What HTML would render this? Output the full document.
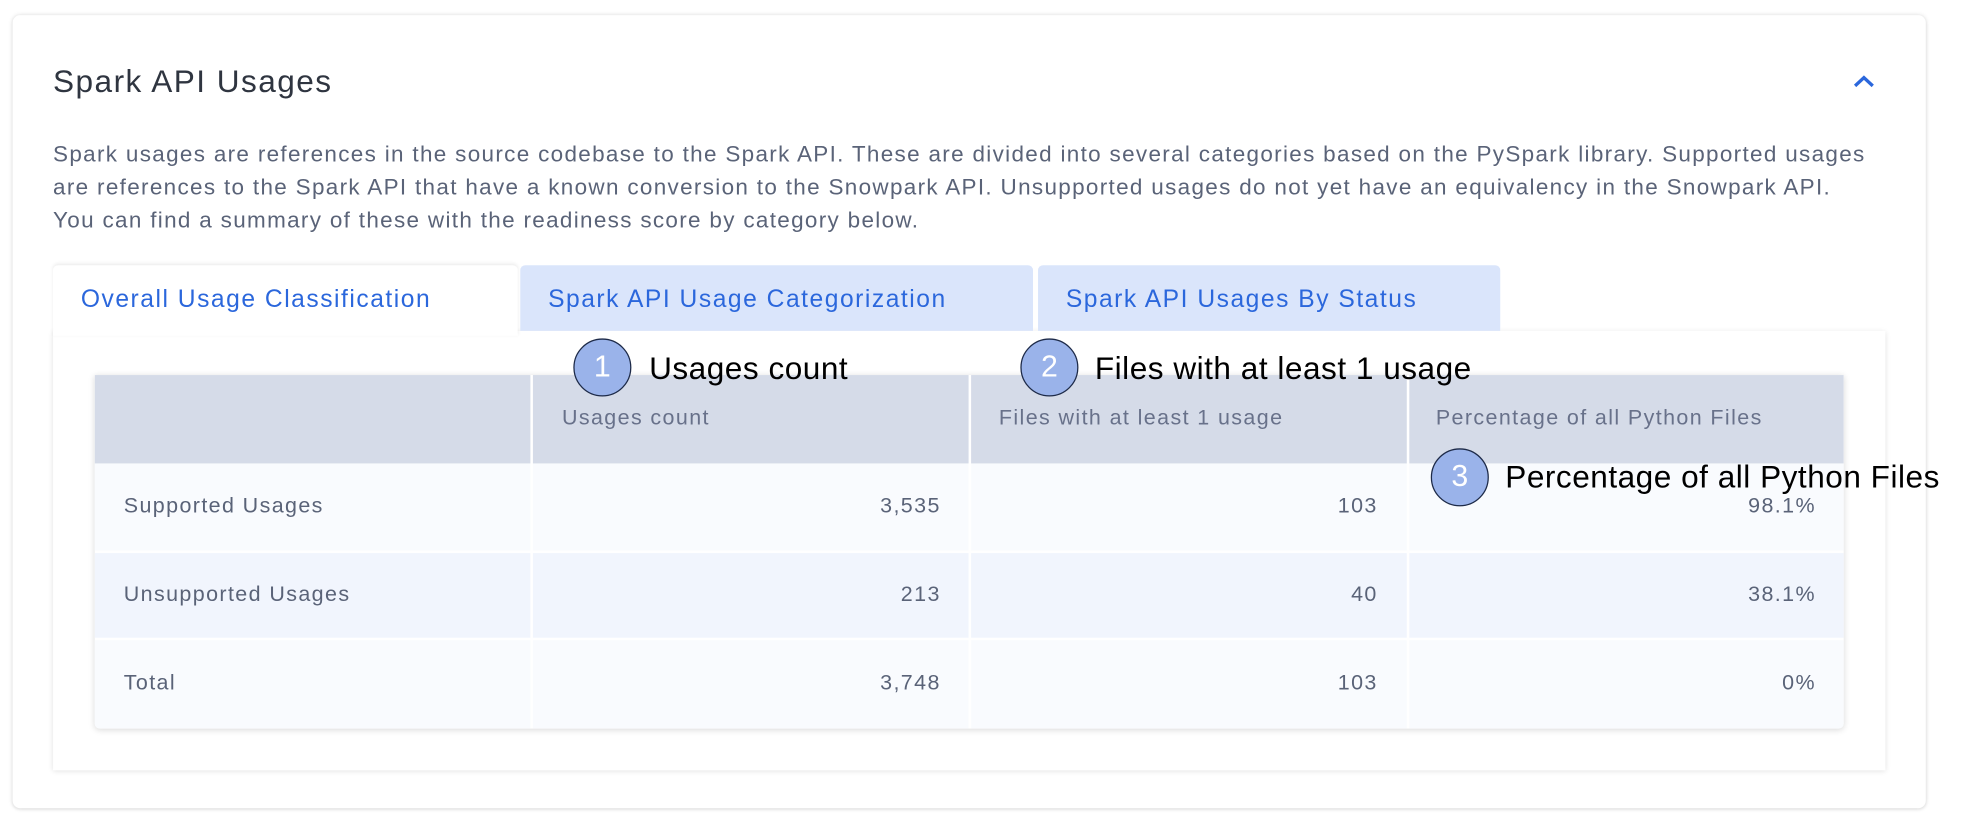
<!DOCTYPE html>
<html><head><meta charset="utf-8"><style>
html,body{margin:0;padding:0;background:#fff;width:1970px;height:822px;overflow:hidden}
#s{position:absolute;left:0;top:0;width:1560px;height:651px;transform:scale(1.26282);transform-origin:0 0;font-family:"Liberation Sans",sans-serif}
.card{position:absolute;left:10px;top:12px;width:1515px;height:628px;background:#fff;border-radius:6px;box-shadow:0 0 4px rgba(0,0,0,.12),0 1px 3px rgba(0,0,0,.08)}
.title{position:absolute;left:42px;top:51px;font-size:25px;letter-spacing:1.15px;color:#2f3540}
.p{position:absolute;left:42px;top:109px;white-space:nowrap;font-size:17.8px;letter-spacing:1.05px;line-height:26px;color:#5a6378}
.tab{position:absolute;top:210px;height:52px;line-height:54px;font-size:19.5px;letter-spacing:1.2px;color:#2b67dc;padding-left:22px;box-sizing:border-box;border-radius:4px 4px 0 0;white-space:nowrap}
.panel{position:absolute;left:42px;top:262px;width:1451px;height:348px;background:#fff;box-shadow:0 1px 4px rgba(0,0,0,.12)}
.tbl{position:absolute;left:75px;top:297px;width:1385px;height:280px;box-shadow:0 1px 5px rgba(0,0,0,.15);border-radius:0 0 4px 4px;overflow:hidden}
.c{position:absolute;box-sizing:border-box;font-size:17px;letter-spacing:1.1px;color:#5a6378;white-space:nowrap}
.h{background:#d5dbe8;color:#68718a}
.circ{position:absolute;width:46px;height:46px;border-radius:50%;background:#9ab3ea;border:1.5px solid #1d2a48;box-sizing:border-box;color:#fff;font-size:24px;text-align:center;line-height:44px}
.an{position:absolute;font-size:25px;color:#000;letter-spacing:0.4px;white-space:nowrap}
</style></head><body><div id="s">
<div class="card"></div>
<div class="title">Spark API Usages</div>
<svg style="position:absolute;left:1466px;top:58px" width="20" height="14" viewBox="0 0 20 14"><path d="M3 10 L10 3.5 L17 10" fill="none" stroke="#2b67dc" stroke-width="2.6"/></svg>
<div class="p">Spark usages are references in the source codebase to the Spark API. These are divided into several categories based on the PySpark library. Supported usages<br>are references to the Spark API that have a known conversion to the Snowpark API. Unsupported usages do not yet have an equivalency in the Snowpark API.<br>You can find a summary of these with the readiness score by category below.</div>
<div class="panel"></div>
<div class="tab" style="left:42px;width:368px;background:#fff;height:56px;box-shadow:0 -1px 3px rgba(0,0,0,.08)">Overall Usage Classification</div>
<div class="tab" style="left:412px;width:406px;background:#dae5fb">Spark API Usage Categorization</div>
<div class="tab" style="left:822px;width:366px;background:#dae5fb">Spark API Usages By Status</div>
<div class="tbl">
<div class="c h" style="left:0;top:0;width:345px;height:70px"></div>
<div class="c h" style="left:347px;top:0;width:345px;height:70px;padding:24px 0 0 23px">Usages count</div>
<div class="c h" style="left:694px;top:0;width:345px;height:70px;padding:24px 0 0 22px">Files with at least 1 usage</div>
<div class="c h" style="left:1041px;top:0;width:344px;height:70px;padding:24px 0 0 21px">Percentage of all Python Files</div>
<div class="c" style="left:0;top:70px;width:345px;height:69px;background:#f9fbfe;padding:24px 0 0 23px">Supported Usages</div>
<div class="c" style="left:347px;top:70px;width:345px;height:69px;background:#f9fbfe;padding:24px 22px 0 0;text-align:right">3,535</div>
<div class="c" style="left:694px;top:70px;width:345px;height:69px;background:#f9fbfe;padding:24px 23px 0 0;text-align:right">103</div>
<div class="c" style="left:1041px;top:70px;width:344px;height:69px;background:#f9fbfe;padding:24px 22px 0 0;text-align:right">98.1%</div>
<div class="c" style="left:0;top:141px;width:345px;height:67px;background:#f1f5fd;padding:23px 0 0 23px">Unsupported Usages</div>
<div class="c" style="left:347px;top:141px;width:345px;height:67px;background:#f1f5fd;padding:23px 22px 0 0;text-align:right">213</div>
<div class="c" style="left:694px;top:141px;width:345px;height:67px;background:#f1f5fd;padding:23px 23px 0 0;text-align:right">40</div>
<div class="c" style="left:1041px;top:141px;width:344px;height:67px;background:#f1f5fd;padding:23px 22px 0 0;text-align:right">38.1%</div>
<div class="c" style="left:0;top:210px;width:345px;height:70px;background:#f9fbfe;padding:24px 0 0 23px">Total</div>
<div class="c" style="left:347px;top:210px;width:345px;height:70px;background:#f9fbfe;padding:24px 22px 0 0;text-align:right">3,748</div>
<div class="c" style="left:694px;top:210px;width:345px;height:70px;background:#f9fbfe;padding:24px 23px 0 0;text-align:right">103</div>
<div class="c" style="left:1041px;top:210px;width:344px;height:70px;background:#f9fbfe;padding:24px 22px 0 0;text-align:right">0%</div>
</div>
<div class="circ" style="left:454px;top:268px">1</div>
<div class="an" style="left:514px;top:278px">Usages count</div>
<div class="circ" style="left:808px;top:268px">2</div>
<div class="an" style="left:867px;top:278px">Files with at least 1 usage</div>
<div class="circ" style="left:1133px;top:355px">3</div>
<div class="an" style="left:1192px;top:364px">Percentage of all Python Files</div>
</div></body></html>
